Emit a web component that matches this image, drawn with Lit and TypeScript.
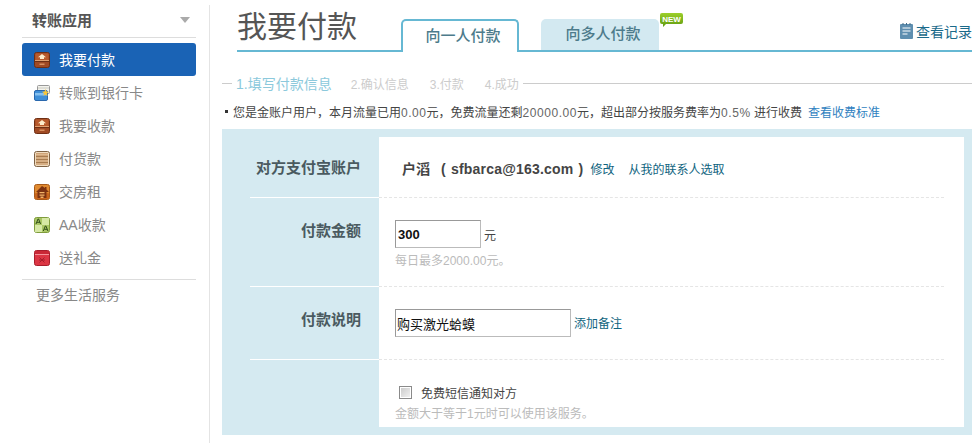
import { LitElement, html, css, svg } from 'lit';
import { customElement } from 'lit/decorators.js';

const drawer = svg`
  <rect x=".5" y=".5" width="15" height="15" rx="2" fill="#a04a24" stroke="#6e2f14"/>
  <rect x="1.500" y="1.500" width="13" height="6.500" fill="#b85a2c"/>
  <path d="M8 2l4 3.200H10V7H6V5.200H4z" fill="#fdeccb"/>
  <rect x="1" y="8" width="14" height="1" fill="#e0a070"/>
  <rect x="1" y="9" width="14" height="1" fill="#6e2f14"/>
  <rect x="5.500" y="11.500" width="5" height="1.500" fill="#d89060"/>`;

const icons: Record<string, unknown> = {
  pay: drawer,
  bank: svg`
    <rect x="3.500" y=".5" width="12" height="8" rx="1" fill="#f3f3ee" stroke="#999"/>
    <path d="M4 3h11" stroke="#c9c9c0"/>
    <rect x=".5" y="5.500" width="13" height="10" rx="1.500" fill="#3f8fd8" stroke="#2a68ad"/>
    <rect x="1" y="8" width="12" height="2.500" fill="#86c0ee"/>
    <path d="M11.500 4l1 2.500 2.500.3-2 1.700.6 2.500-2.100-1.400-2.100 1.400.6-2.500-2-1.700 2.500-.3z" fill="#f7c63a"/>`,
  collect: drawer,
  goods: svg`
    <rect x=".5" y=".5" width="15" height="15" rx="2" fill="#f0dcc0" stroke="#7f6244"/>
    <rect x="2" y="2" width="12" height="12" fill="#d0a478"/>
    <path d="M2 5.500h12M2 8.500h12M2 11.500h12" stroke="#a87c50"/>
    <path d="M2 3.500h12M2 7h12M2 10h12M2 13h12" stroke="#e4c49c" stroke-width=".7"/>`,
  rent: svg`
    <rect x=".5" y=".5" width="15" height="15" rx="2" fill="#e08a30" stroke="#a85a18"/>
    <rect x="1" y="9" width="14" height="6" rx="1" fill="#c8641c"/>
    <path d="M8 2L2 8h1.500v6h9V8H15l-2.500-2.500V3H11v1z" fill="#7c3210"/>
    <path d="M5.500 8h5v1.200h-5zM5.500 10.500h5v1.200h-5zM6.500 12.500h3V14h-3z" fill="#f2b468"/>`,
  aa: svg`
    <rect x=".5" y=".5" width="15" height="15" rx="2" fill="#a9c664" stroke="#7f9c3c"/>
    <rect x="8" y="1" width="7" height="7" fill="#d6e8a4"/>
    <rect x="1" y="8" width="7" height="7" fill="#d6e8a4"/>
    <path d="M2 7l2-5h.6l2 5M3 5.300h3" fill="none" stroke="#33501a"/>
    <path d="M9.300 14l2-5h.6l2 5M10.300 12.300h3" fill="none" stroke="#33501a"/>`,
  gift: svg`
    <rect x=".5" y=".5" width="15" height="15" rx="2" fill="#dc3644" stroke="#a81e2c"/>
    <rect x="1" y="1" width="14" height="3" fill="#c92836"/>
    <rect x="1" y="4" width="14" height="1" fill="#f4929a"/>
    <path d="M5.500 7.500l5 5M10.500 7.500l-5 5M5 10h6" stroke="#a81e2c"/>`,
};

const menu = [
  { icon: 'pay', label: '我要付款', active: true },
  { icon: 'bank', label: '转账到银行卡' },
  { icon: 'collect', label: '我要收款' },
  { icon: 'goods', label: '付货款' },
  { icon: 'rent', label: '交房租' },
  { icon: 'aa', label: 'AA收款' },
  { icon: 'gift', label: '送礼金' },
];

@customElement('app-root')
export class AppRoot extends LitElement {
  static styles = css`
    :host {
      display: flex;
      width: 978px;
      height: 443px;
      overflow: hidden;
      background: #fff;
      font-family: 'Liberation Sans', 'Noto Sans CJK SC', sans-serif;
      font-size: 12px;
      color: #444;
    }
    a {
      text-decoration: none;
      color: #0f6480;
    }

    /* sidebar */
    .side {
      box-sizing: border-box;
      width: 210px;
      margin-top: 5px;
      padding: 0 13px 0 22px;
      border-right: 1px solid #e4e4e4;
      flex: none;
    }
    .side_head {
      display: flex;
      align-items: center;
      justify-content: space-between;
      box-sizing: border-box;
      height: 33px;
      padding: 0 6px 3px 10px;
      border-bottom: 1px solid #ddd;
      font-size: 15px;
      font-weight: bold;
      color: #555;
    }
    .arrow {
      width: 0;
      height: 0;
      border: 5px solid transparent;
      border-top: 6px solid #aaa;
      border-bottom: 0;
    }
    .side_list {
      margin-top: 5px;
      padding-bottom: 5px;
      border-bottom: 1px solid #ddd;
    }
    .side_item {
      display: flex;
      align-items: center;
      gap: 9px;
      height: 33px;
      padding-left: 12px;
      border-radius: 3px;
      font-size: 14px;
      color: #888;
    }
    .side_item span {
      margin-top: -2px;
    }
    .side_item svg {
      width: 16px;
      height: 16px;
      flex: none;
    }
    .side_item.active {
      background: #1a63b5;
      color: #fff;
    }
    .side_more {
      padding: 5px 0 0 14px;
      font-size: 14px;
      line-height: 20px;
      color: #888;
    }

    /* main */
    .main {
      width: 750px;
      margin-left: 12px;
      flex: none;
    }
    .head {
      display: flex;
      align-items: flex-end;
      height: 52px;
      margin-left: 15px;
      border-bottom: 2px solid #66b8d3;
      box-sizing: border-box;
    }
    .title {
      align-self: flex-start;
      width: 164px;
      margin-top: 7px;
      font-size: 30px;
      line-height: 40px;
      color: #555;
    }
    .tab {
      position: relative;
      box-sizing: border-box;
      width: 118px;
      height: 31px;
      margin-right: 22px;
      padding-left: 6px;
      border-radius: 5px 5px 0 0;
      text-align: center;
      font-size: 15px;
      font-weight: 500;
      line-height: 30px;
      color: #4d7b8b;
      background: #d3e9f1;
    }
    .tab.on {
      height: 33px;
      margin-bottom: -2px;
      background: #fff;
      border: 2px solid #66b8d3;
      border-bottom: 0;
      line-height: 29px;
    }
    .badge {
      position: absolute;
      left: 119px;
      top: -6px;
    }
    .record {
      display: flex;
      align-items: center;
      gap: 3px;
      margin-left: auto;
      margin-bottom: 9px;
      font-size: 14px;
      color: #1a6a8a;
    }
    .steps {
      display: flex;
      align-items: center;
      gap: 21px;
      height: 18px;
      margin-top: 22px;
      color: #ccc;
      font-size: 12px;
    }
    .steps .rule {
      flex: 1;
      height: 1px;
      margin-left: -17px;
      background: #ccc;
    }
    .steps .lead {
      width: 10px;
      height: 1px;
      margin-right: -17px;
      background: #ccc;
    }
    .steps .cur {
      margin-right: -2px;
      font-size: 14px;
      color: #8cc9dc;
    }
    .notice {
      display: flex;
      align-items: center;
      height: 18px;
      margin-top: 10px;
      padding-left: 3px;
      color: #444;
      white-space: pre;
    }
    .notice i {
      width: 3px;
      height: 3px;
      margin-right: 5px;
      background: #333;
    }
    .notice em {
      font-style: normal;
      letter-spacing: 0.55px;
      color: #666;
    }
    .notice a {
      margin-left: 6px;
      color: #2f7fc0;
    }

    /* form panel */
    .panel {
      margin-top: 9px;
      padding: 8px 8px 8px 0;
      background: #d5eaf1;
    }
    .row {
      display: flex;
    }
    .label {
      box-sizing: border-box;
      width: 129px;
      margin-left: 28px;
      padding-right: 18px;
      border-bottom: 1px solid #fff;
      text-align: right;
      font-size: 15px;
      font-weight: bold;
      color: #4a5a60;
      flex: none;
    }
    .row:last-child .label {
      border-bottom: 0;
    }
    .value {
      flex: 1;
      background: #fff;
    }
    .cell {
      box-sizing: border-box;
      height: 100%;
      margin-right: 20px;
      padding-left: 16px;
      border-bottom: 1px dashed #e5e5e5;
    }
    .row:last-child .cell {
      border-bottom: 0;
    }
    .acct .label {
      height: 61px;
      line-height: 62px;
    }
    .acct .cell {
      display: flex;
      align-items: center;
      padding: 2px 0 0 23px;
    }
    .acct b {
      margin-right: 7px;
      font-size: 14px;
      color: #444;
      font-weight: bold;
    }
    .acct .mail {
      margin-left: 11px;
      word-spacing: 1px;
      letter-spacing: 0.2px;
    }
    .acct a + a {
      margin-left: 14px;
    }
    .amount .label {
      height: 89px;
      padding-top: 22px;
      line-height: 22px;
    }
    .amount .cell {
      padding-top: 22px;
    }
    .field {
      display: flex;
      align-items: center;
      gap: 3px;
    }
    .field a {
      padding-bottom: 2px;
    }
    input[type='text'] {
      box-sizing: border-box;
      height: 28px;
      margin: 0;
      padding: 0 2px;
      border: 1px solid #bbb;
      border-top-color: #999;
      border-left-color: #999;
      outline: none;
      font-family: inherit;
      font-size: 13px;
      color: #111;
    }
    .money {
      width: 86px;
      font-weight: bold;
    }
    input.memo {
      width: 176px;
      padding-left: 1px;
    }
    .hint {
      margin-top: 6px;
      line-height: 14px;
      color: #bbb;
    }
    .note .label {
      height: 73px;
      padding-top: 22px;
      line-height: 22px;
    }
    .note .cell {
      padding-top: 22px;
    }
    .sms .label {
      height: 67px;
    }
    .sms .cell {
      padding-top: 25px;
    }
    .check {
      display: flex;
      align-items: center;
      gap: 9px;
      padding-left: 4px;
      height: 14px;
    }
    .check input {
      appearance: none;
      width: 13px;
      height: 13px;
      margin: 0;
      border: 1px solid #8a8a8a;
      background: linear-gradient(135deg, #c8c8c8, #f4f4f4);
      box-shadow: inset 0 0 0 1px #fff;
    }
    .sms .hint {
      margin-top: 8px;
    }
  `;

  render() {
    return html`
      <aside class="side">
        <div class="side_head">转账应用<span class="arrow"></span></div>
        <div class="side_list">
          ${menu.map(
            (m) => html`
              <div class="side_item ${m.active ? 'active' : ''}">
                <svg viewBox="0 0 16 16">${icons[m.icon]}</svg>
                <span>${m.label}</span>
              </div>
            `
          )}
        </div>
        <div class="side_more">更多生活服务</div>
      </aside>

      <main class="main">
        <div class="head">
          <div class="title">我要付款</div>
          <div class="tab on">向一人付款</div>
          <div class="tab">
            向多人付款
            <svg class="badge" width="23" height="14" viewBox="0 0 23 14">
              <defs>
                <linearGradient id="g" x1="0" y1="0" x2="0" y2="1">
                  <stop offset="0" stop-color="#9ccf2a" />
                  <stop offset="1" stop-color="#5f9a10" />
                </linearGradient>
              </defs>
              <path d="M2 0h19a2 2 0 012 2v7a2 2 0 01-2 2H6l-3 3v-3H2a2 2 0 01-2-2V2a2 2 0 012-2z" fill="url(#g)" />
              <text x="11.500" y="8.500" text-anchor="middle" font-size="8" font-weight="bold" fill="#fff" font-family="Liberation Sans">NEW</text>
            </svg>
          </div>
          <a class="record" href="#">
            <svg width="13" height="16" viewBox="0 0 13 16">
              <rect y="1" width="13" height="15" rx="1" fill="#5f8fb0" />
              <path d="M3 0v2M6.500 0v2M10 0v2" stroke="#3f6a88" />
              <path d="M2.500 5h8M2.500 8h8M2.500 11h5" stroke="#fff" />
            </svg>
            查看记录
          </a>
        </div>

        <div class="steps">
          <span class="lead"></span>
          <span class="cur">1.填写付款信息</span>
          <span>2.确认信息</span>
          <span>3.付款</span>
          <span>4.成功</span>
          <span class="rule"></span>
        </div>

        <div class="notice"><i></i><span>您是金账户用户，本月流量已用<em>0.00</em>元，免费流量还剩<em>20000.00</em>元，超出部分按服务费率为<em>0.5%</em> 进行收费</span><a href="#">查看收费标准</a></div>

        <section class="panel">
          <div class="row acct">
            <div class="label">对方支付宝账户</div>
            <div class="value">
              <div class="cell">
                <b>户滔<span class="mail">( sfbarca@163.com )</span></b>
                <a href="#">修改</a>
                <a href="#">从我的联系人选取</a>
              </div>
            </div>
          </div>
          <div class="row amount">
            <div class="label">付款金额</div>
            <div class="value">
              <div class="cell">
                <div class="field"><input class="money" type="text" value="300" /> 元</div>
                <div class="hint">每日最多2000.00元。</div>
              </div>
            </div>
          </div>
          <div class="row note">
            <div class="label">付款说明</div>
            <div class="value">
              <div class="cell">
                <div class="field">
                  <input class="memo" type="text" value="购买激光蛤蟆" />
                  <a href="#">添加备注</a>
                </div>
              </div>
            </div>
          </div>
          <div class="row sms">
            <div class="label"></div>
            <div class="value">
              <div class="cell">
                <label class="check"><input type="checkbox" />免费短信通知对方</label>
                <div class="hint">金额大于等于1元时可以使用该服务。</div>
              </div>
            </div>
          </div>
        </section>
      </main>
    `;
  }
}
